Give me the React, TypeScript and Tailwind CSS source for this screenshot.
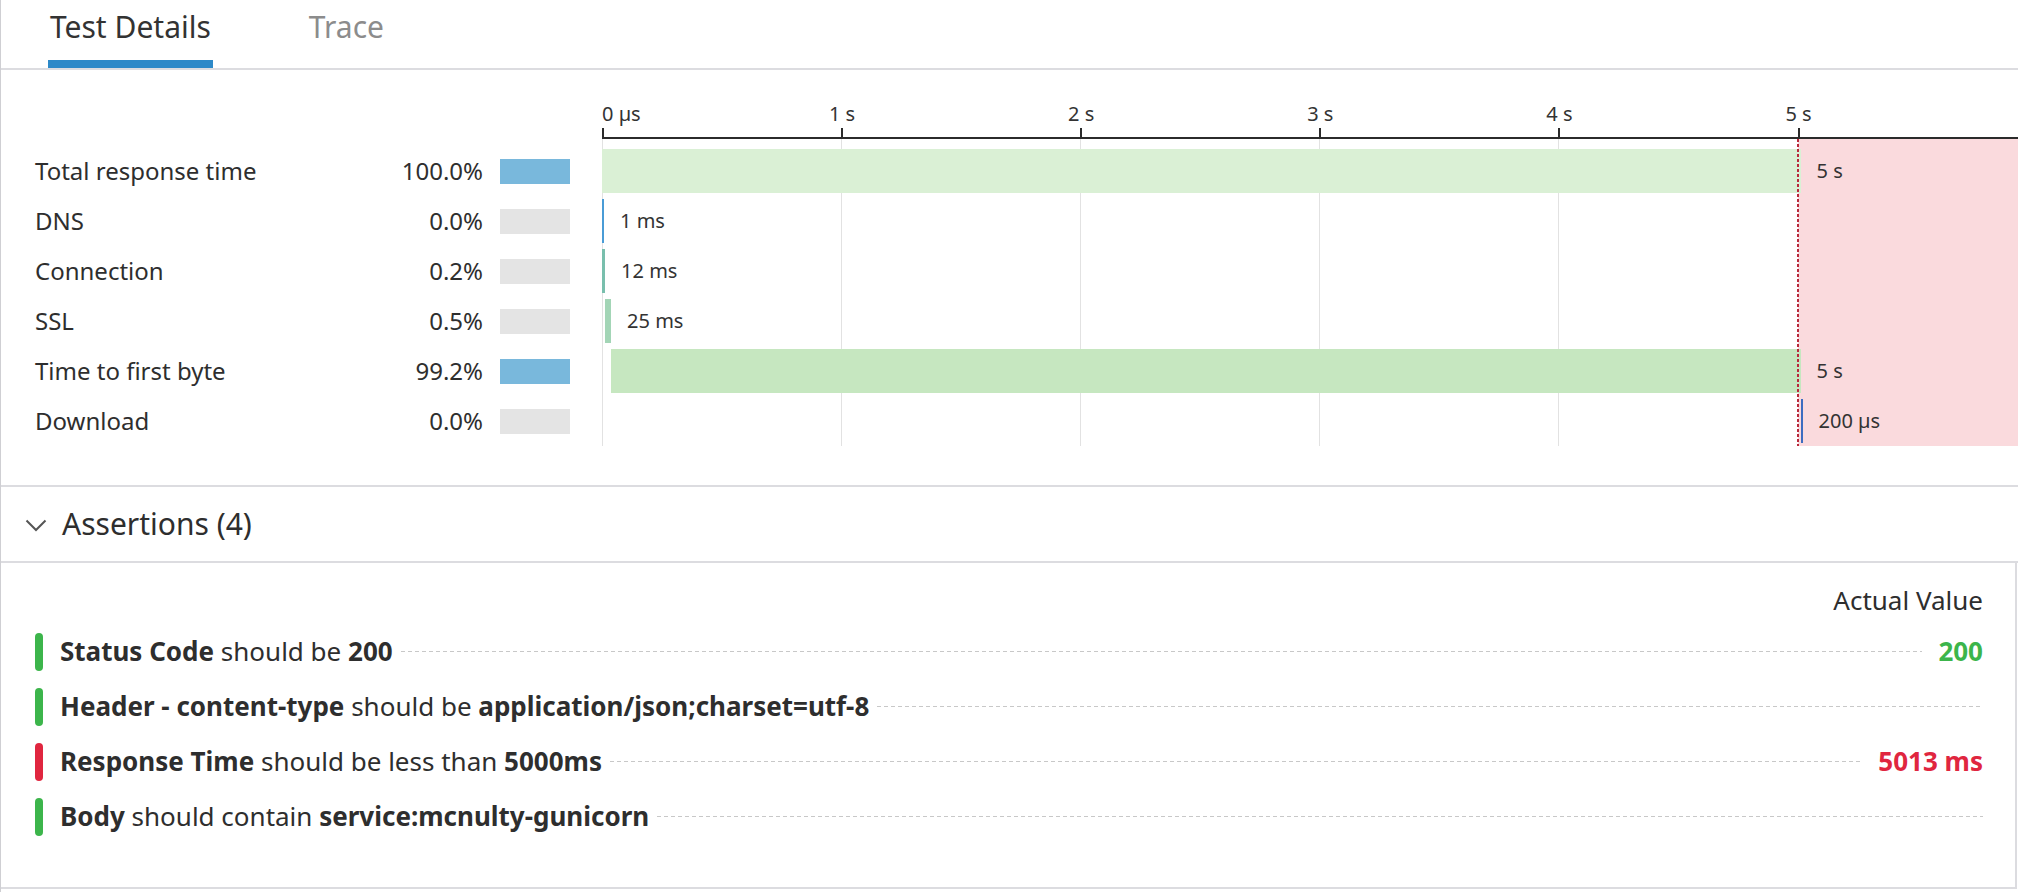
import React from "react";

const PX_PER_S = 239.1;
const x = (ms: number) => (ms / 1000) * PX_PER_S;

type Row = {
  label: string;
  pct: string;
  hi?: boolean;
  start: number;
  dur: number;
  color: string;
  text: string;
};

const rows: Row[] = [
  { label: "Total response time", pct: "100.0%", hi: true, start: 0, dur: 5013, color: "#daf0d5", text: "5 s" },
  { label: "DNS", pct: "0.0%", start: 0, dur: 1, color: "#4a9cd6", text: "1 ms" },
  { label: "Connection", pct: "0.2%", start: 1, dur: 12, color: "#79bfad", text: "12 ms" },
  { label: "SSL", pct: "0.5%", start: 13, dur: 25, color: "#a3d5b6", text: "25 ms" },
  { label: "Time to first byte", pct: "99.2%", hi: true, start: 38, dur: 4975, color: "#c6e7c0", text: "5 s" },
  { label: "Download", pct: "0.0%", start: 5013, dur: 0.2, color: "#3d6cc0", text: "200 µs" },
];

const ticks = [0, 1, 2, 3, 4, 5];

type Assertion = {
  ok: boolean;
  parts: { t: string; b?: boolean }[];
  value?: string;
};

const assertions: Assertion[] = [
  {
    ok: true,
    parts: [{ t: "Status Code", b: true }, { t: " should be " }, { t: "200", b: true }],
    value: "200",
  },
  {
    ok: true,
    parts: [
      { t: "Header - content-type", b: true },
      { t: " should be " },
      { t: "application/json;charset=utf-8", b: true },
    ],
  },
  {
    ok: false,
    parts: [{ t: "Response Time", b: true }, { t: " should be less than " }, { t: "5000ms", b: true }],
    value: "5013 ms",
  },
  {
    ok: true,
    parts: [{ t: "Body", b: true }, { t: " should contain " }, { t: "service:mcnulty-gunicorn", b: true }],
  },
];

export default function App() {
  return (
    <div className="w-[2018px] h-[892px] overflow-hidden bg-white border-l border-[#cfcfd3] font-['Noto_Sans',sans-serif] text-[#2e2e2e] flex flex-col">
      {/* Tabs */}
      <div className="h-[70px] shrink-0 border-b-2 border-[#dcdce0] flex pl-[47px] gap-[94px]">
        <div className="h-[68px] border-b-[8px] border-[#2d89c8] px-[2px] pt-[8px] text-[30px] leading-[38px] text-[#333333]">
          Test Details
        </div>
        <div className="h-[68px] px-[2px] pt-[8px] text-[30px] leading-[38px] text-[#8c8c8c]">Trace</div>
      </div>

      {/* Waterfall */}
      <div className="h-[417px] shrink-0 flex border-b-2 border-[#dcdce0]">
        <div className="w-[601px] shrink-0 pt-[76px] pl-[34px] pr-[32px]">
          {rows.map((r) => (
            <div key={r.label} className="flex items-center h-[50px] text-[24px]">
              <span className="flex-1 whitespace-nowrap">{r.label}</span>
              <span>{r.pct}</span>
              <div className={`ml-[17px] w-[70px] h-[25px] ${r.hi ? "bg-[#79b8dc]" : "bg-[#e4e4e4]"}`} />
            </div>
          ))}
        </div>

        <div className="flex-1 flex flex-col">
          {/* axis */}
          <div className="relative h-[69px] border-b-2 border-[#2b2b2b]">
            {ticks.map((s) => (
              <React.Fragment key={s}>
                <span
                  className={`absolute top-[30px] text-[20px] leading-[28px] text-[#333333] whitespace-nowrap ${
                    s === 0 ? "" : "-translate-x-1/2"
                  }`}
                  style={{ left: s === 0 ? 0 : x(s * 1000) + 1 }}
                >
                  {s === 0 ? "0 µs" : `${s} s`}
                </span>
                <div className="absolute bottom-0 w-[2px] h-[9px] bg-[#2b2b2b]" style={{ left: x(s * 1000) }} />
              </React.Fragment>
            ))}
          </div>

          {/* plot */}
          <div className="relative h-[307px]">
            {ticks.map((s) => (
              <div key={s} className="absolute top-0 bottom-0 w-px bg-[#e2e2e2]" style={{ left: x(s * 1000) }} />
            ))}
            <div className="absolute top-0 bottom-0 right-0 bg-[#fadadd]" style={{ left: x(5000) }} />
            <div className="relative pt-[7px]">
              {rows.map((r) => {
                const left = x(r.start);
                const w = Math.max(x(r.dur), 2);
                return (
                  <div key={r.label} className="relative h-[50px]">
                    <div
                      className="absolute top-[3px] h-[44px]"
                      style={{ left, width: w, backgroundColor: r.color }}
                    />
                    <span
                      className="absolute top-[11px] text-[20px] leading-[28px] text-[#333333] whitespace-nowrap"
                      style={{ left: left + w + 16 }}
                    >
                      {r.text}
                    </span>
                  </div>
                );
              })}
            </div>
            <div
              className="absolute top-0 bottom-0 w-[2px] bg-[repeating-linear-gradient(to_bottom,#b8283a_0px,#b8283a_3px,transparent_3px,transparent_5px)]"
              style={{ left: x(5000) - 1 }}
            />
          </div>
        </div>
      </div>

      {/* Assertions header */}
      <div className="h-[76px] shrink-0 border-b-2 border-[#dcdce0] flex items-center pl-[24px]">
        <svg width="22" height="13" viewBox="0 0 22 13" className="mt-[3px]">
          <path d="M1.5 1.5 L11 11 L20.5 1.5" fill="none" stroke="#555555" strokeWidth="2" />
        </svg>
        <span className="ml-[15px] text-[30px] leading-[40px]">Assertions (4)</span>
      </div>

      {/* Assertions box */}
      <div className="h-[326px] shrink-0 mr-px border-r-2 border-b-2 border-[#dcdce0] pt-[21px] pr-[32px]">
        <div className="text-right text-[26px] leading-[32px]">Actual Value</div>
        <div className="mt-[8px]">
          {assertions.map((a, i) => (
            <div key={i} className="flex items-center h-[55px] pl-[34px]">
              <div className={`w-[8px] h-[38px] rounded-full shrink-0 ${a.ok ? "bg-[#3cb54b]" : "bg-[#e0263f]"}`} />
              <span className="ml-[17px] text-[26px] whitespace-nowrap">
                {a.parts.map((p, j) => (
                  <span key={j} className={p.b ? "font-bold" : ""}>
                    {p.t}
                  </span>
                ))}
              </span>
              <div className="flex-1 ml-[8px] h-px bg-[repeating-linear-gradient(to_right,#c8c8c8_0px,#c8c8c8_4px,transparent_4px,transparent_7px)]" />
              {a.value && (
                <span
                  className={`ml-[16px] text-[26px] font-bold whitespace-nowrap ${
                    a.ok ? "text-[#3cb54b]" : "text-[#e0263f]"
                  }`}
                >
                  {a.value}
                </span>
              )}
            </div>
          ))}
        </div>
      </div>
    </div>
  );
}
